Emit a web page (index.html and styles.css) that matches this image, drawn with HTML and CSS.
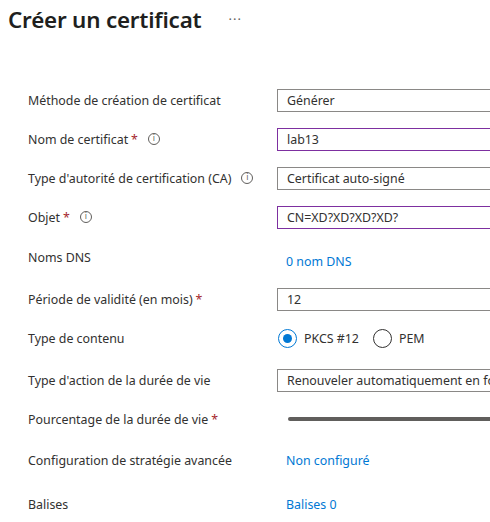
FILE: index.html
```html
<!DOCTYPE html>
<html lang="fr">
<head>
<meta charset="utf-8">
<link rel="stylesheet" href="styles.css">
</head>
<body>
<header class="head">
  <h1 class="title">Créer un certificat</h1>
  <span class="more">···</span>
</header>
<main class="form">
  <div class="row">
    <div class="label">Méthode de création de certificat</div>
    <div class="field"><div class="input">Générer</div></div>
  </div>
  <div class="row">
    <div class="label">Nom de certificat <span class="req">*</span><span class="info">i</span></div>
    <div class="field"><div class="input dirty">lab13</div></div>
  </div>
  <div class="row">
    <div class="label">Type d'autorité de certification (CA)<span class="info">i</span></div>
    <div class="field"><div class="input">Certificat auto-signé</div></div>
  </div>
  <div class="row">
    <div class="label">Objet <span class="req">*</span><span class="info">i</span></div>
    <div class="field"><div class="input dirty">CN=XD?XD?XD?XD?</div></div>
  </div>
  <div class="row row-dns">
    <div class="label">Noms DNS</div>
    <div class="field field-open"><a class="link link-dns">0 nom DNS</a></div>
  </div>
  <div class="row row-period">
    <div class="label">Période de validité (en mois) <span class="req">*</span></div>
    <div class="field"><div class="input">12</div></div>
  </div>
  <div class="row row-content">
    <div class="label">Type de contenu</div>
    <div class="field radios">
      <label class="radio"><span class="dot checked"></span>PKCS #12</label>
      <label class="radio"><span class="dot"></span>PEM</label>
    </div>
  </div>
  <div class="row row-action">
    <div class="label">Type d'action de la durée de vie</div>
    <div class="field"><div class="input">Renouveler automatiquement en fonction d'un pourcentage</div></div>
  </div>
  <div class="row row-pct">
    <div class="label">Pourcentage de la durée de vie <span class="req">*</span></div>
    <div class="field"><div class="slider"></div></div>
  </div>
  <div class="row row-policy">
    <div class="label">Configuration de stratégie avancée</div>
    <div class="field"><a class="link">Non configuré</a></div>
  </div>
  <div class="row row-tags">
    <div class="label">Balises</div>
    <div class="field"><a class="link">Balises 0</a></div>
  </div>
</main>
</body>
</html>
```
FILE: styles.css
```css
html, body {
  margin: 0;
  padding: 0;
  background: #ffffff;
  overflow: hidden;
}
body {
  width: 490px;
  height: 522px;
  font-family: "Noto Sans", "Open Sans", sans-serif;
  font-size: 12.4px;
  color: #323130;
}
.head {
  display: flex;
  align-items: center;
  padding: 4px 0 0 8px;
  height: 30px;
}
.title {
  margin: 0;
  font-size: 22.4px;
  font-weight: 600;
  color: #201f1e;
  letter-spacing: -0.2px;
}
.more {
  margin-left: 27px;
  font-size: 13px;
  color: #605e5c;
  letter-spacing: 1px;
}
.form {
  padding: 54px 0 0 28px;
}
.row {
  display: grid;
  grid-template-columns: 249px 1fr;
  align-items: center;
  height: 24px;
  margin-bottom: 15px;
}
.label {
  display: flex;
  align-items: center;
  white-space: nowrap;
}
.req {
  color: #a4262c;
  margin-left: 3px;
}
.info {
  display: inline-flex;
  align-items: center;
  justify-content: center;
  width: 10px;
  height: 10px;
  border: 1px solid #605e5c;
  border-radius: 50%;
  font-size: 8px;
  line-height: 1;
  color: #605e5c;
  margin-left: 10px;
  font-family: "DejaVu Sans", sans-serif;
}
.field {
  min-width: 0;
  overflow: hidden;
}
.field-open {
  overflow: visible;
}
.input {
  height: 21px;
  border: 1px solid #8a8886;
  border-right: none;
  padding-left: 9px;
  display: flex;
  align-items: center;
  white-space: nowrap;
  overflow: hidden;
  margin-top: 1px;
}
.input.dirty {
  border-color: #7d2fa0;
}
.link {
  color: #0078d4;
  text-decoration: none;
  padding-left: 9px;
}
.row-dns { margin-top: 16px; margin-bottom: 18px; }
.link-dns { position: relative; top: 4px; }
.row-content { margin-bottom: 18px; }
.row-pct { margin-bottom: 17px; }
.row-policy { margin-bottom: 20px; }
.radios {
  display: flex;
  align-items: center;
  gap: 13px;
}
.radio {
  display: flex;
  align-items: center;
  gap: 7px;
}
.dot {
  width: 17px;
  height: 17px;
  border: 1px solid #323130;
  border-radius: 50%;
  box-sizing: content-box;
  display: inline-flex;
  align-items: center;
  justify-content: center;
  margin-left: 1px;
}
.dot.checked {
  border-color: #0078d4;
}
.dot.checked::after {
  content: "";
  width: 9px;
  height: 9px;
  background: #0078d4;
  border-radius: 50%;
}
.slider {
  margin-left: 11px;
  height: 4px;
  background: #605e5c;
  border-radius: 2px 0 0 2px;
}
```
